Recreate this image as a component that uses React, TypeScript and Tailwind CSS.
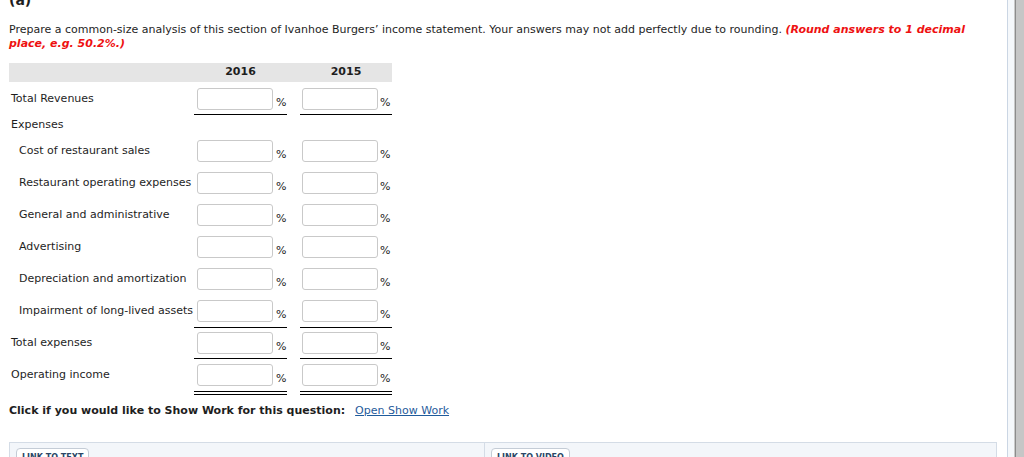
import React from "react";

type Line = "none" | "single" | "double";

const rows: { label: string; indent?: boolean; line: Line; kind: string }[] = [
  { label: "Cost of restaurant sales", indent: true, line: "none", kind: "reg" },
  { label: "Restaurant operating expenses", indent: true, line: "none", kind: "reg" },
  { label: "General and administrative", indent: true, line: "none", kind: "reg" },
  { label: "Advertising", indent: true, line: "none", kind: "reg" },
  { label: "Depreciation and amortization", indent: true, line: "none", kind: "reg" },
  { label: "Impairment of long-lived assets", indent: true, line: "single", kind: "imp" },
];

function PctCell({ line, pad, first }: { line: Line; pad: string; first?: boolean }) {
  const border =
    line === "single"
      ? "border-b border-black"
      : line === "double"
      ? "border-b-[4px] border-double border-black"
      : "";
  return (
    <div className={`${first ? "w-[93px] pl-[3px]" : "w-[92px] pl-[2px]"} ${pad} ${border} flex items-end`}>
      <input
        type="text"
        className="w-[76px] h-[22px] border border-[#c9c9c9] rounded-[3px] bg-white outline-none"
      />
      <span className={`${first ? "ml-[3px]" : "ml-[2px]"} text-[11px] leading-[12px] mb-[1px]`}>%</span>
    </div>
  );
}

function Row({ label, indent, line, pad }: { label: string; indent?: boolean; line: Line; pad: string }) {
  return (
    <div className="flex">
      <div className={`w-[185px] ${pad} ${indent ? "pl-[10px]" : "pl-[2px]"}`}>
        <div className="h-[22px] flex items-center whitespace-nowrap">{label}</div>
      </div>
      <PctCell line={line} pad={pad} first />
      <div className="w-[13px]" />
      <PctCell line={line} pad={pad} />
    </div>
  );
}

export default function App() {
  return (
    <div
      className="h-[457px] overflow-hidden flex bg-white text-[#1e1e1e] text-[11px]"
      style={{ fontFamily: '"DejaVu Sans", Verdana, sans-serif' }}
    >
      <div className="w-[1008px] shrink-0 border-r border-[#cbd6e4] pl-[9px] pr-[10px]">
        <div className="-mt-[9px]">
          <div className="font-bold text-[14px] leading-[18px]">(a)</div>
          <p className="mt-[14px] leading-[14px]">
            Prepare a common-size analysis of this section of Ivanhoe Burgers’ income statement. Your answers
            may not add perfectly due to rounding.{" "}
            <span className="font-bold italic text-[#ee1111]">
              (Round answers to 1 decimal
              <br />
              place, e.g. 50.2%.)
            </span>
          </p>

          <div className="mt-[12px] w-[383px]">
            <div className="flex h-[19px] bg-[#e5e5e5] font-bold items-center">
              <div className="w-[185px]" />
              <div className="w-[93px] text-center">2016</div>
              <div className="w-[13px]" />
              <div className="w-[92px] text-center">2015</div>
            </div>

            <Row label="Total Revenues" line="single" pad="pt-[6px] pb-[4px]" />
            <div className="h-[21px] flex items-center pl-[2px]">Expenses</div>
            {rows.map((r) => (
              <Row
                key={r.label}
                label={r.label}
                indent={r.indent}
                line={r.line}
                pad={r.kind === "imp" ? "pt-[4px] pb-[5px]" : "pt-[4px] pb-[6px]"}
              />
            ))}
            <Row label="Total expenses" line="single" pad="pt-[4px] pb-[4px]" />
            <Row label="Operating income" line="double" pad="pt-[5px] pb-[5px]" />
          </div>

          <div className="mt-[9px] leading-[14px] flex">
            <span className="font-bold">Click if you would like to Show Work for this question:</span>
            <a href="#" className="ml-[10px] text-[#1f5b9b] underline">
              Open Show Work
            </a>
          </div>

          <div className="mt-[24px] w-[988px] h-[40px] flex border border-[#d4dce6] bg-[#f3f6fa]">
            <div className="w-[475px] border-r border-[#d4dce6] pl-[6px] pt-[5px]">
              <button className="px-[5px] h-[20px] rounded-[4px] border border-[#c4ccd6] bg-white text-[8px] font-bold text-[#2b4766] leading-[18px]">
                LINK TO TEXT
              </button>
            </div>
            <div className="flex-1 pl-[6px] pt-[5px]">
              <button className="px-[5px] h-[20px] rounded-[4px] border border-[#c4ccd6] bg-white text-[8px] font-bold text-[#2b4766] leading-[18px]">
                LINK TO VIDEO
              </button>
            </div>
          </div>
        </div>
      </div>
      <div className="w-[7px] bg-[#f5f8fb] border-r border-[#c9c9c9] shrink-0" />
      <div className="w-[1px] bg-[#8c8c8c] shrink-0" />
      <div className="flex-1 bg-[#c6c6c6]" />
    </div>
  );
}
